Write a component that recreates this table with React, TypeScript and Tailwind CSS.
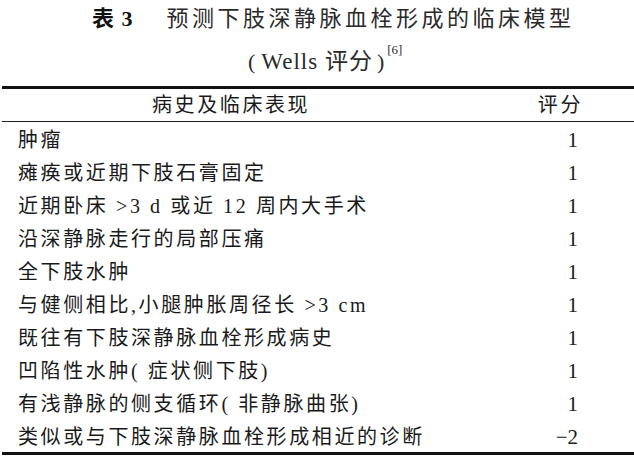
const ROWS: [string, string][] = [
  ['肿瘤', '1'],
  ['瘫痪或近期下肢石膏固定', '1'],
  ['近期卧床 >3 d 或近 12 周内大手术', '1'],
  ['沿深静脉走行的局部压痛', '1'],
  ['全下肢水肿', '1'],
  ['与健侧相比,小腿肿胀周径长 >3 cm', '1'],
  ['既往有下肢深静脉血栓形成病史', '1'],
  ['凹陷性水肿( 症状侧下肢)', '1'],
  ['有浅静脉的侧支循环( 非静脉曲张)', '1'],
  ['类似或与下肢深静脉血栓形成相近的诊断', '−2'],
];

const FONT = "font-['Liberation_Serif','Noto_Sans_CJK_SC',serif]";

export default function App() {
  return (
    <div className={`w-[634px] h-[459px] bg-white text-[#1a1a1a] ${FONT} overflow-hidden`}>
      {/* caption */}
      <div className="h-[37px] flex items-center pl-[92px] text-[22px] leading-none text-[#2a2a2a]">
        <span className="font-bold tracking-[1px] text-[#111]">表 3</span>
        <span className="ml-[33px] tracking-[3.5px]">预测下肢深静脉血栓形成的临床模型</span>
      </div>
      <div className="h-[49px] flex items-center pl-[248px] text-[22px] leading-none text-[#2a2a2a]">
        <span>(</span>
        <span className="ml-[6px] tracking-[1px] text-[23px]">Wells 评分</span>
        <span className="ml-[4px]">)</span>
        <span className="ml-[3px] text-[13px] self-start mt-[6px]">[6]</span>
      </div>

      {/* table */}
      <div className="ml-[2px] h-[3px] bg-[#111]" />
      <div className="h-[32px] flex items-center justify-between pl-[152px] pr-[51px] text-[20px] tracking-[2.6px] leading-none">
        <span>病史及临床表现</span>
        <span>评分</span>
      </div>
      <div className="ml-[2px] h-px bg-[#222]" />
      {ROWS.map(([label, score]) => (
        <div key={label} className="h-[33px] flex items-center justify-between pl-[18px] pr-[56px] pt-[3px] text-[20px] leading-none">
          <span className="tracking-[2.6px]">{label}</span>
          <span className="text-[21px]">{score}</span>
        </div>
      ))}
      <div className="ml-[2px] h-[3px] bg-[#111]" />
    </div>
  );
}
